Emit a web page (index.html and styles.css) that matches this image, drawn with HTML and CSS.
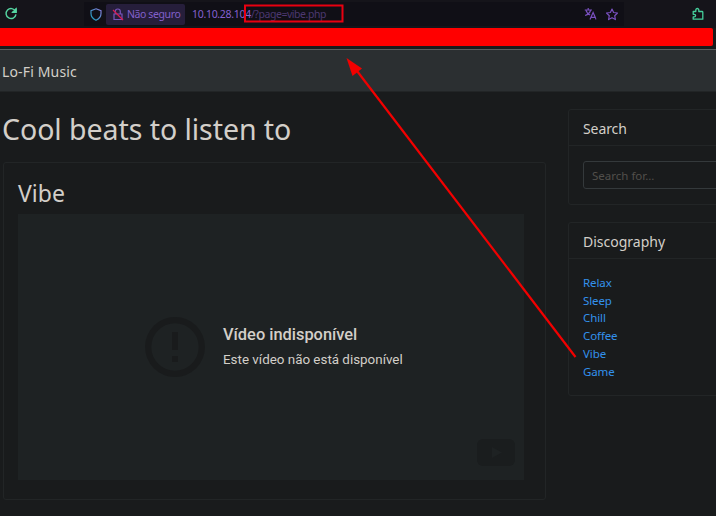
FILE: index.html
```html
<!DOCTYPE html>
<html lang="pt">
<head>
<meta charset="utf-8">
<title>Lo-Fi Music</title>
<link rel="stylesheet" href="styles.css">
</head>
<body>
<header class="toolbar">
  <svg class="reload" width="14" height="14" viewBox="0 0 14 14" fill="none" stroke="#55d6a2" stroke-width="1.4"><path d="M11.5 4.2A5 5 0 1 0 12 7.4M12 1.4v3.9H8.2"/><path d="M12 2v3.3H8.8z" fill="#55d6a2"/></svg>
  <div class="address">
    <svg class="shield" width="12" height="13" viewBox="0 0 12 13" fill="none" stroke-width="1.2"><defs><linearGradient id="shade" x1="0" y1="1" x2="1" y2="0"><stop stop-color="#16a5bd"/><stop offset="1" stop-color="#8b7bdd"/></linearGradient></defs><path stroke="url(#shade)" d="M6 .8 11 2.6v3c0 3-2 5.4-5 6.700C3 11 1 8.600 1 5.600v-3z"/></svg>
    <div class="security">
      <svg width="12" height="13" viewBox="0 0 12 13" fill="none" stroke="#7755bb" stroke-width="1.2"><path d="M3.300 5.500V3.500a2.500 2.500 0 0 1 5 0v2M2 6h8v5.500H2z"/><path d="m1 2 10 10" stroke="#d81b50" stroke-width="1.300"/></svg>
      <span class="secure">Não seguro</span>
    </div>
    <span class="host">10.10.28.104</span><span class="path">/?page=vibe.php</span>
    <svg class="translate" width="12" height="12" viewBox="0 0 12 12" fill="none" stroke="#7950bf" stroke-width="1.200"><path d="M0 2h7.500M3.700 0v2M6.200 2C5.500 4.800 3.500 6.500.600 7.500M1.500 2.500C2.300 4.800 3.800 6.300 5.600 7M5.500 11.500 8.600 4.500l3.100 7M6.700 9.300h3.800"/></svg>
    <svg class="star" width="13" height="13" viewBox="0 0 13 13" fill="none" stroke="#7950bf" stroke-width="1.200" stroke-linejoin="round"><path d="m6.500 1 1.600 3.500 3.900.5-2.800 2.700.7 3.900-3.400-1.900-3.400 1.900.7-3.900L1 5l3.900-.5z"/></svg>
  </div>
  <svg class="extension" width="12" height="14" viewBox="0 0 12 14" fill="none" stroke="#45cf9c" stroke-width="1.300" stroke-linejoin="round"><path d="M1.200 4.500h2.600V3a1.500 1.500 0 0 1 3 0v1.500H10q.8 0 .8.800v6.900H1.200V9.900h1.100a1.300 1.300 0 0 0 0-2.600H1.200z"/></svg>
</header>
<div class="redaction"></div>
<nav class="navbar"><span>Lo-Fi Music</span></nav>
<div class="content">
  <main>
    <h1>Cool beats to listen to</h1>
    <section class="card player">
      <h2>Vibe</h2>
      <div class="video">
        <svg class="alert" width="60" height="60" viewBox="0 0 60 60"><circle cx="30" cy="30" r="26.800" fill="none" stroke="#191b1c" stroke-width="6.200"/><path fill="#191b1c" d="M27 15h6v18h-6zM27 39h6v6h-6z"/></svg>
        <div class="message"><p class="headline">Vídeo indisponível</p><p class="detail">Este vídeo não está disponível</p></div>
        <svg class="tube" width="38" height="27" viewBox="0 0 38 27"><rect width="38" height="27" rx="6" fill="#1a1d1e"/><path d="m15 8 10 5.500L15 19z" fill="#1e2223"/></svg>
      </div>
    </section>
  </main>
  <aside>
    <section class="card search">
      <h3>Search</h3>
      <div class="body"><input type="text" placeholder="Search for..." aria-label="Search"></div>
    </section>
    <section class="card list">
      <h3>Discography</h3>
      <ul><li><a>Relax</a></li><li><a>Sleep</a></li><li><a>Chill</a></li><li><a>Coffee</a></li><li><a>Vibe</a></li><li><a>Game</a></li></ul>
    </section>
  </aside>
</div>
<svg class="annotation" width="716" height="516" viewBox="0 0 716 516"><rect x="245" y="5.500" width="97.500" height="16" fill="none" stroke="#e80010" stroke-width="2"/><path d="M575.500 357 354 67" stroke="#f20000" stroke-width="2.200"/><path d="m346.500 58 15.500 10.500-9.500 7.500z" fill="#f20000"/></svg>
</body>
</html>
```

FILE: styles.css
```css
* { box-sizing: border-box; }
body {
  margin: 0;
  width: 716px;
  height: 516px;
  overflow: hidden;
  background: #191b1c;
  color: #d3cfc9;
  font-family: "Noto Sans", "Open Sans", sans-serif;
}
h1, h2, h3, p, ul { margin: 0; padding: 0; font-weight: 400; }
svg { flex: none; }
.toolbar {
  height: 28px;
  display: flex;
  align-items: center;
  padding: 0 12px 0 4px;
  background: #15141a;
}
.address {
  width: 540px;
  height: 24px;
  margin-left: 66px;
  padding: 0 6px;
  display: flex;
  align-items: center;
  background: #100f16;
  font-size: 10.5px;
  white-space: nowrap;
}
.security {
  width: 79px;
  height: 21px;
  margin: 0 7px 0 4px;
  padding-left: 6px;
  display: flex;
  align-items: center;
  gap: 3px;
  border-radius: 2px;
  background: #261e3b;
  color: #8260ca;
}
.secure { letter-spacing: -.4px; }
.host { color: #8560d0; letter-spacing: -.3px; }
.path { color: #4c3870; letter-spacing: -.45px; }
.translate { margin-left: auto; }
.star { margin-left: 9px; }
.address .translate, .address .star { transform: translateX(.5px); }
.extension { margin-left: auto; }
.redaction {
  width: 713px;
  height: 18px;
  border-radius: 0 2px 2px 0;
  background: #f00;
}
.navbar {
  height: 43px;
  margin-top: 3px;
  padding: 2px 2px 0;
  display: flex;
  align-items: center;
  border-top: 1px solid #5a5c5e;
  border-bottom: 1px solid #222526;
  background: #2b2f31;
  font-size: 14px;
  letter-spacing: .15px;
}
.content { display: flex; gap: 22px; padding-left: 3px; }
main { width: 543px; flex: none; }
h1 {
  height: 70px;
  margin-left: -1px;
  padding-top: 17px;
  font-size: 28.5px;
  line-height: 40px;
  letter-spacing: -.05px;
  white-space: nowrap;
}
.card { border: 1px solid #222526; border-radius: 3px; }
.player { height: 338px; padding: 14px; }
h2 { height: 37px; font-size: 23px; line-height: 33px; }
.video {
  position: relative;
  width: 506px;
  height: 266px;
  padding-left: 127px;
  display: flex;
  align-items: center;
  gap: 18px;
  background: #1e2223;
  font-family: Roboto, sans-serif;
  white-space: nowrap;
}
.headline { font-size: 16.4px; font-weight: 500; line-height: 26px; }
.detail { font-size: 13.4px; line-height: 24px; }
.tube { position: absolute; right: 9px; bottom: 14px; }
aside { width: 170px; flex: none; padding-top: 17px; }
.search { height: 96px; margin-bottom: 17px; }
.list { height: 174px; }
h3 { height: 36px; padding-left: 14px; border-bottom: 1px solid #222526; font-size: 14px; line-height: 37px; }
.search h3 { letter-spacing: -.1px; }
.body { padding: 15px 14px; }
input {
  width: 155px;
  height: 28px;
  padding: 0 8px;
  border: 1px solid #34393b;
  border-radius: 3px;
  background: #191b1c;
  font: 11.5px "Noto Sans", sans-serif;
}
input::placeholder { color: #514f4b; opacity: 1; }
ul { padding: 15px 14px; list-style: none; color: #3391ec; font-size: 11.5px; line-height: 17.7px; letter-spacing: -.1px; }
.annotation { position: absolute; inset: 0; pointer-events: none; }
```
